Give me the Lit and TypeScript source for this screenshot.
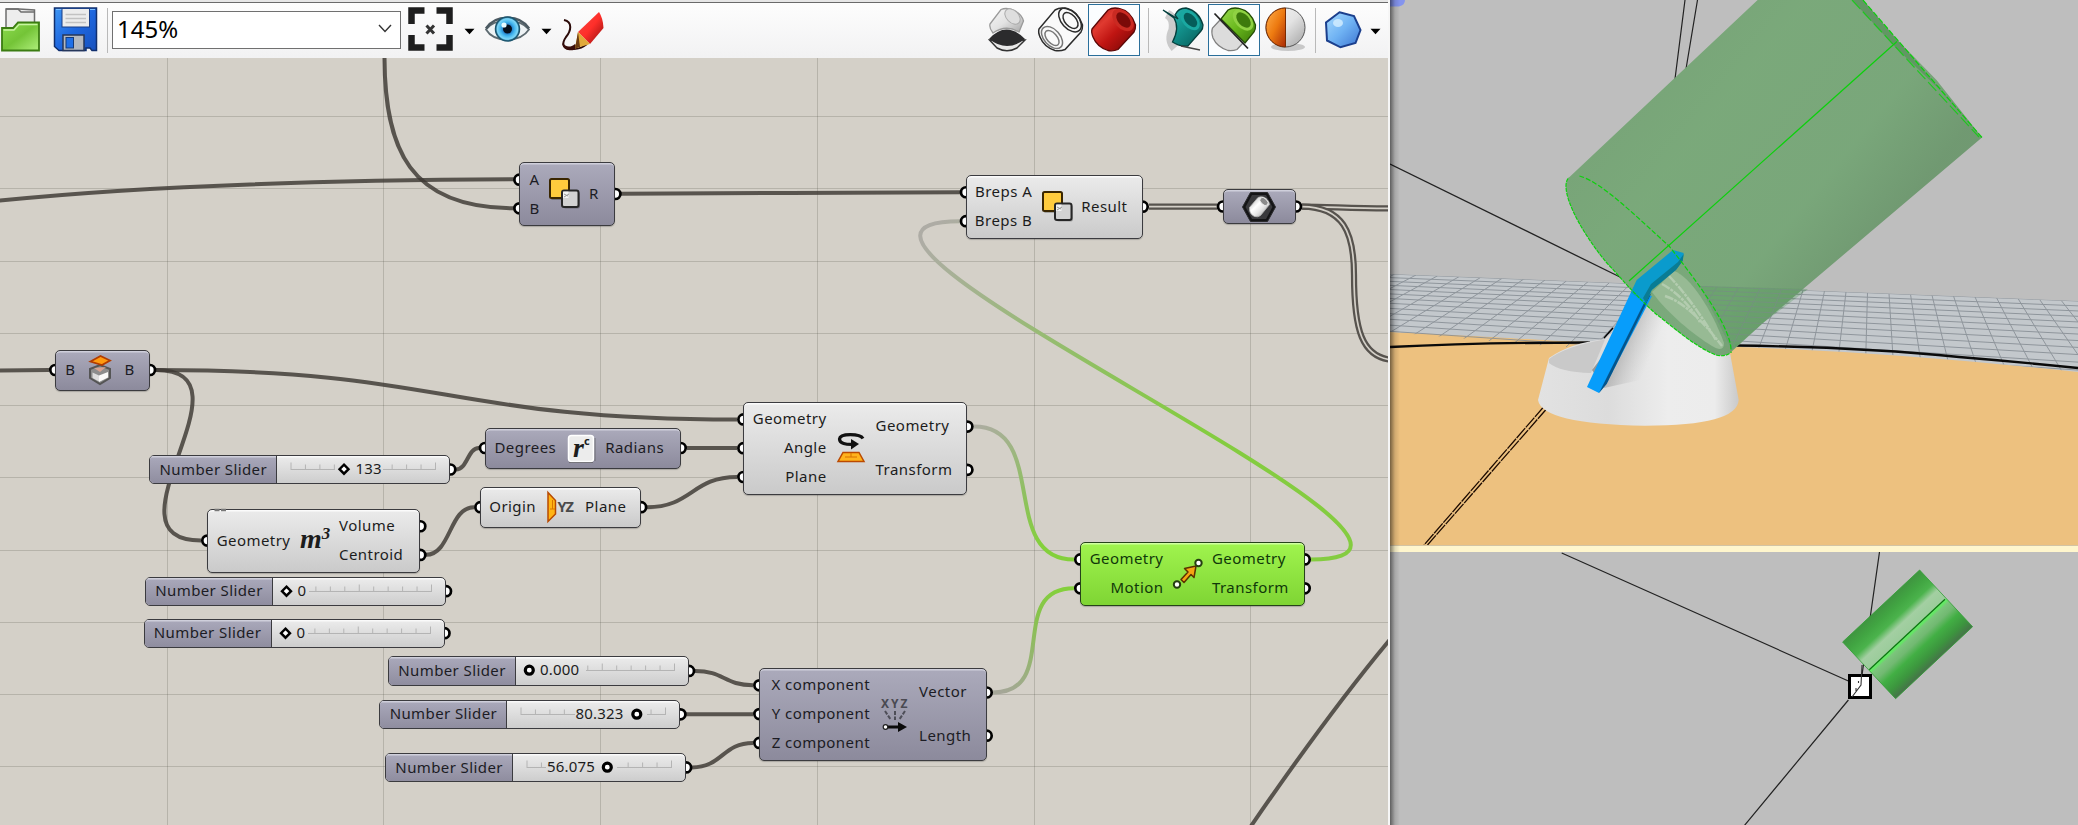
import { LitElement, html, svg, css } from "lit";
import { customElement } from "lit/decorators.js";

type Kind = "dark" | "light" | "pick";
interface GhNode {
  x: number; y: number; w: number; h: number; kind: Kind;
  pad: number; inW: number; mid: number;
  ins: string[]; outs: string[]; icon: string;
}
interface Slider {
  x: number; y: number; value: string; knob: number; textX: number;
  round?: boolean; gap: [number, number];
}

const NODES: GhNode[] = [
  { x: 519.4, y: 162, w: 96, h: 64, kind: "dark", pad: 10.5, inW: 10, mid: 49.5, ins: ["A", "B"], outs: ["R"], icon: "bool" },
  { x: 966, y: 174.5, w: 176.7, h: 64.4, kind: "light", pad: 10.5, inW: 56, mid: 49, ins: ["Breps A", "Breps B"], outs: ["Result"], icon: "bool" },
  { x: 1223, y: 189, w: 73, h: 35, kind: "dark", pad: 0, inW: 0, mid: 70, ins: [""], outs: [""], icon: "geo" },
  { x: 55.3, y: 349.5, w: 94.7, h: 41, kind: "dark", pad: 12.5, inW: 8, mid: 49, ins: ["B"], outs: ["B"], icon: "cap" },
  { x: 207.3, y: 508.6, w: 213, h: 64, kind: "light", pad: 9.5, inW: 74, mid: 48.5, ins: ["Geometry"], outs: ["Volume", "Centroid"], icon: "m3" },
  { x: 485, y: 427.5, w: 195.7, h: 41, kind: "dark", pad: 10.5, inW: 61, mid: 49, ins: ["Degrees"], outs: ["Radians"], icon: "rad" },
  { x: 480.4, y: 486.7, w: 160.7, h: 41, kind: "light", pad: 9, inW: 47, mid: 49, ins: ["Origin"], outs: ["Plane"], icon: "yz" },
  { x: 743.4, y: 401.7, w: 224, h: 93, kind: "light", pad: 9, inW: 74.5, mid: 49, ins: ["Geometry", "Angle", "Plane"], outs: ["Geometry", "Transform"], icon: "rot" },
  { x: 759.4, y: 667.6, w: 227.3, h: 93, kind: "dark", pad: 10, inW: 101, mid: 49, ins: ["X component", "Y component", "Z component"], outs: ["Vector", "Length"], icon: "xyz" },
  { x: 1080.3, y: 541.7, w: 224.4, h: 64.3, kind: "pick", pad: 9, inW: 74.5, mid: 48.5, ins: ["Geometry", "Motion"], outs: ["Geometry", "Transform"], icon: "move" },
];

const SLIDERS: Slider[] = [
  { x: 149.3, y: 455, value: "133", knob: 67, textX: 78.5, gap: [58, 106] },
  { x: 145, y: 576.7, value: "0", knob: 13.5, textX: 24.5, gap: [0, 36] },
  { x: 143.5, y: 618.7, value: "0", knob: 13.5, textX: 24.5, gap: [0, 36] },
  { x: 388, y: 656.4, value: "0.000", knob: 13.3, textX: 24, round: true, gap: [0, 70] },
  { x: 379.4, y: 699.8, value: "80.323", knob: 129.8, textX: 68.5, round: true, gap: [68, 140] },
  { x: 385.1, y: 752.9, value: "56.075", knob: 94.3, textX: 34, round: true, gap: [33, 104] },
];

const PAD_Y = 3.3;
const SLIDER_W = 301;
const SLIDER_H = 29;

/** Soft S-shaped connection whose handles run horizontally. */
const link = (x1: number, y1: number, x2: number, y2: number, d = (x2 - x1) / 2) =>
  `M${x1} ${y1}C${x1 + d} ${y1} ${x2 - d} ${y2} ${x2} ${y2}`;

const WIRES: string[] = [
  "M-4 201C110 189 280 180.5 514 179.3",
  "M384.5 54C384 150 410 208.3 514 208.3",
  link(621, 193.7, 960, 192.3),
  "M-4 370.6L49 369.9",
  link(156, 369.9, 737, 419.6),
  link(156, 369.9, 201, 540.4, 105),
  link(456, 469.5, 479, 448),
  link(426, 554.8, 474, 507.2, 25),
  link(687, 448, 737, 448),
  link(647, 507.2, 737, 477),
  link(695, 670.9, 753, 685.2),
  link(686, 714.2, 753, 714.2),
  link(692, 767.4, 753, 742.9),
  "M1249 829Q1330 711 1392 637",
];

const DOUBLES: string[] = [
  "M1149 206.6L1217 206.6",
  "M1302 206.6C1330 206.6 1350 208.3 1392 208.3",
  "M1302 206.6C1343 207 1354 232 1354 275C1354 330 1362 357 1392 360",
];

const port = (cx: number, cy: number) => svg`<circle class="port" cx=${cx} cy=${cy} r="5"></circle>`;

const nodePorts = (n: GhNode) => {
  const inner = n.h - PAD_Y * 2;
  const at = (i: number, count: number) => n.y + PAD_Y + (inner / count) * (i + 0.5);
  return svg`${n.ins.map((_, i) => port(n.x, at(i, n.ins.length)))}
    ${n.outs.map((_, i) => port(n.x + n.w, at(i, n.outs.length)))}`;
};

const icons: Record<string, unknown> = {
  bool: svg`
    <rect x="6" y="6" width="19" height="19" rx="1.5" fill="#000" opacity=".25"></rect>
    <rect x="18.500" y="17" width="16.500" height="16.500" rx="2" fill="#000" opacity=".25"></rect>
    <rect x="5" y="4" width="19" height="19" rx="1.5" fill="#ffcb3d" stroke="#3a2600" stroke-width="2"></rect>
    <rect x="17" y="15.5" width="16.5" height="16.5" rx="2" fill="#d2d2d2" stroke="#262626" stroke-width="2"></rect>
    <path d="M18 23V16.5H23.5V23Z" fill="#fff" opacity=".7"></path>
    <path d="M19 19l4 2m-4 1l5-3" stroke="#999" stroke-width="1"></path>`,
  geo: svg`
    <path d="M10.500 4.500H27.500L35.500 19L27.500 33.500H10.500L2.500 19Z" fill="#141416" stroke="#2b2b2d" stroke-width="1"></path>
    <path d="M12 7H26L32.500 19L26 31H12L5.500 19Z" fill="#39393c"></path>
    <path d="M9.500 19.500L18 9.500Q20 8.500 23 9Q28.500 11 29.500 16.500L20.500 27.500Q18 29.500 14.500 28.500Q9 26 9.500 19.500Z" fill="url(#steel)" stroke="#b5b5b5" stroke-width=".8"></path>
    <ellipse cx="24" cy="13.500" rx="4.800" ry="3" transform="rotate(45 24 13.5)" fill="#8b8b8b" stroke="#eee" stroke-width=".8"></ellipse>`,
  cap: svg`
    <path d="M9 18L19 14L29 18V27L19 33L9 27Z" fill="#8d8d8d" stroke="#555" stroke-width="2"></path>
    <path d="M11.500 21.500L18 24.500V30.500L11.500 27Z" fill="#ddd"></path><path d="M18 24.500L27 21V26.500L18 31Z" fill="#fafafa"></path>
    <path d="M13 17L25 16L19 21Z" fill="#e9a894" opacity=".8"></path>
    <path d="M9.500 10.500L19.500 5L29 9.500L21 14Z" fill="#ff9a10" stroke="#b23c00" stroke-width="1.800"></path>`,
  m3: svg`<text class="m3" x="4" y="26">m<tspan class="sup" dy="-9">3</tspan></text>`,
  rad: svg`
    <rect x="6.500" y="6.500" width="25" height="26" rx="3" fill="#ececec" stroke="#fff" stroke-width="1.500"></rect>
    <path d="M7 33.500H31M33 9V32" stroke="#555" stroke-width="1" opacity=".6"></path>
    <text class="m3" x="11" y="28">r</text><text class="tiny" x="22" y="16">c</text>`,
  yz: svg`
    <path d="M6 4.500L13.500 12.500V26L6 33.500Z" fill="#ffb414" stroke="#b84a00" stroke-width="1.500"></path>
    <path d="M8 21H13M10.500 12V21" stroke="#d87500"></path>
    <text class="yz" x="15.500" y="23.5">YZ</text>`,
  rot: svg`
    <path d="M31 9.500C28 4.500 8 4 7.500 10C7.500 14.500 14 15.500 21 15.300" fill="none" stroke="#111" stroke-width="3.200"></path>
    <path d="M19 10L27 15L19 20.500Z" fill="#111"></path>
    <path d="M11 23.500H27L32 32.500H6Z" fill="#ffb31c" stroke="#bb4a00" stroke-width="1.500"></path>
    <path d="M13 28H25M19 24V28" stroke="#d87000"></path>`,
  xyz: svg`
    <text class="xyz" x="5" y="13">XYZ</text>
    <path d="M9 16L15 25M19 16V25M29 16L23 25" stroke="#4e4e58" stroke-width="2" stroke-dasharray="4 1.500"></path>
    <path d="M11 32H24" stroke="#0a0a0a" stroke-width="3"></path><path d="M22 27L31 32L22 37Z" fill="#0a0a0a"></path>
    <circle cx="9.500" cy="32" r="2.300" fill="#fff" stroke="#222" stroke-width="1.200"></circle>`,
  move: svg`
    <path d="M12 24.500L19 17L15.500 13.500L27 11L25 22.500L22 19.500L15 27.500Z" fill="#f5a512" stroke="#5c3200" stroke-width="1.500" stroke-linejoin="round"></path>
    <circle cx="29.500" cy="8" r="3.200" fill="#fff" stroke="#263f12" stroke-width="2"></circle>
    <circle cx="8" cy="29.500" r="3.200" fill="#fff" stroke="#263f12" stroke-width="2"></circle>`,
};

/** Toolbar slot; its drawing uses toolbar coordinates. */
const slot = (x0: number, x1: number, body: unknown) =>
  html`<svg class="slot" width=${x1 - x0} height="58" viewBox="${x0} 0 ${x1 - x0} 58">${body}</svg>`;
const drop = (x0: number, x1: number, cx: number) =>
  slot(x0, x1, svg`<path d="M${cx - 5} 28.700H${cx + 5}L${cx} 34.300Z" fill="#000"></path>`);
const rule = (x0: number, x1: number, cx: number) =>
  slot(x0, x1, svg`<path d="M${cx} 8V53" stroke="#b9b9b9" stroke-width="1"></path>`);
const framed = (x: number) => svg`<rect x=${x} y="4.500" width="51" height="51" fill="#fbfdff" stroke="#2a6f9b"></rect>`;

const CAN = "M1092 29L1108 10Q1113 7 1119 8.500Q1131 11 1135.500 25Q1135.700 29 1134 32L1118 49.500Q1113 51.500 1108 50.500Q1097 47 1093 37Q1091 32 1092 29Z";

const gridFan = () => {
  const out = [];
  for (let x = 900; x < 2400; x += 21.5) {
    const k = (x - 1874) * 0.0042;
    out.push(svg`<path d="M${x} ${274 + (x - 1390) * 0.039}L${x + k * 110} ${384 + (x - 1390) * 0.039}"></path>`);
  }
  let step = 3.6;
  for (let y = 0; y < 110; y += step, step *= 1.05) {
    out.push(svg`<path d="M1390 ${274 + y}L2078 ${301 + y * 1.35}"></path>`);
  }
  return out;
};

@customElement("gh-slider")
class GhSlider extends LitElement {
  static properties = { data: { attribute: false } };
  declare data: Slider;
  static styles = css`
    :host { display: flex; box-sizing: border-box; width: 301px; height: 29.4px; border: 1.3px solid #3b3b3f; border-radius: 5px; overflow: hidden;
      background: linear-gradient(#ececec, #cdcdcd); box-shadow: inset 0 1.500px 0 #fafafa; }
    .name { display: flex; align-items: center; justify-content: center; width: 127px; padding-bottom: 2px; box-sizing: border-box;
      border-right: 1.300px solid #3b3b3f; background: linear-gradient(#aaa9bb, #8f8d9f); box-shadow: inset 0 1.500px 0 #cfcfdb;
      font: 15px "Noto Sans", sans-serif; letter-spacing: .4px; color: #1c1c24; white-space: nowrap; }
    .track { display: block; overflow: visible; }
    .ticks { stroke: #b4b4b4; fill: none; }
    .value { font: 15px "Noto Sans", sans-serif; letter-spacing: .2px; fill: #1c1c1c; }
    .knob { fill: #fff; stroke: #000; }
  `;
  render() {
    const s = this.data;
    const [g0, g1] = s.gap;
    const ticks = Array.from({ length: 11 }, (_, i) => 14 + i * 14.45);
    const seen = ticks.filter((t) => t < g0 || t > g1);
    return html`<div class="name">Number Slider</div>
      <svg class="track" width="171" height="27" viewBox="0 0 171 27">
        <g class="ticks">
          ${seen.map((t) => svg`<path d="M${t} ${Math.abs(t - 14) < 1 || t > 158 || Math.abs(t - 86.25) < 1 ? 6.5 : 8.5}V14"></path>`)}
          ${g0 > 14 ? svg`<path d="M14 13.500H${g0}"></path>` : null}
          <path d="M${g1} 13.500H158.500"></path>
        </g>
        ${s.round
          ? svg`<circle class="knob" cx=${s.knob} cy="13.200" r="4" stroke-width="3.200"></circle>`
          : svg`<path class="knob" d="M${s.knob} 8.700L${s.knob + 4.500} 13.200L${s.knob} 17.700L${s.knob - 4.500} 13.200Z" stroke-width="2.400"></path>`}
        <text class="value" x=${s.textX} y="18">${s.value}</text>
      </svg>`;
  }
}

@customElement("gh-node")
class GhNodeView extends LitElement {
  static properties = { data: { attribute: false } };
  declare data: GhNode;
  static styles = css`
    :host { display: block; }
    .node { display: grid; grid-template-rows: minmax(0, 1fr); box-sizing: border-box; height: 100%; padding: 2px 0; border: 1.300px solid #3b3b3f; border-radius: 5px;
      font: 15px "Noto Sans", sans-serif; letter-spacing: .45px; color: #1c1c1c; white-space: nowrap; }
    .light { background: linear-gradient(#ebebeb, #cacaca); box-shadow: inset 0 1.500px 0 #fbfbfb, 0 1px 1px rgba(0,0,0,.2); }
    .dark { background: linear-gradient(#abaabb, #8c8a9c); box-shadow: inset 0 1.500px 0 #cfcfdb, 0 1px 1px rgba(0,0,0,.2); color: #1c1c24; }
    .pick { background: linear-gradient(#a0f44e, #7fd534); box-shadow: inset 0 1.500px 0 #d0ffa0, 0 1px 1px rgba(0,0,0,.2); border-color: #26431a; color: #10380a; }
    .col { display: flex; flex-direction: column; min-width: 0; }
    .ins { align-items: flex-end; }
    .label { display: flex; flex: 1; align-items: center; padding-bottom: 2px; }
    .pic { display: flex; align-items: center; justify-content: center; min-height: 0; }
    .art { display: block; overflow: visible; flex: none; }
    .m3 { font: italic bold 28px "Liberation Serif", serif; fill: #1c1c1c; letter-spacing: 0; }
    .sup { font-size: 17px; }
    .tiny { font: bold 11px "Noto Sans", sans-serif; fill: #222; }
    .yz { font: bold 14.500px "Noto Sans", sans-serif; fill: #4a4a4a; letter-spacing: -1px; }
    .xyz { font: bold 12px "Noto Sans", sans-serif; fill: #4a4a52; letter-spacing: 2px; }
  `;
  render() {
    const n = this.data;
    return html`<div class="node ${n.kind}" style="padding-left:${Math.max(0, n.pad - 1.3)}px;grid-template-columns:${n.inW}px ${n.mid}px 1fr">
      <div class="col ins">${n.ins.map((t) => html`<span class="label">${t}</span>`)}</div>
      <div class="pic"><svg class="art" width="38" height="38" viewBox="0 0 38 38">
        <defs><linearGradient id="steel" x1="0" y1="0" x2="1" y2="1"><stop offset="0" stop-color="#a5a5a5"></stop><stop offset=".4" stop-color="#fff"></stop><stop offset=".6" stop-color="#e6e6e6"></stop><stop offset="1" stop-color="#8a8a8a"></stop></linearGradient></defs>
        ${icons[n.icon]}</svg></div>
      <div class="col">${n.outs.map((t) => html`<span class="label">${t}</span>`)}</div>
    </div>`;
  }
}

@customElement("app-root")
class AppRoot extends LitElement {
  static styles = css`
    :host { display: flex; width: 2078px; height: 825px; overflow: hidden; background: #bebebe; }
    .editor { display: flex; flex-direction: column; width: 1388px; border-right: 2px solid #f6f6f6; flex: none; }
    .toolbar { display: flex; align-items: stretch; height: 58px; box-sizing: border-box; padding-right: 2px; flex: none; background: linear-gradient(#e6e6e6 0 1.500px, #6a6a6a 1.500px 3px, #fdfdfd 3px, #f2f2f3 57px); }
    .slot { display: block; flex: none; }
    .zoom { display: flex; align-items: center; justify-content: space-between; box-sizing: border-box; width: 289px; height: 38px; margin: 11px 0 0; padding: 0 8px 3px 4px;
      border: 1px solid #707070; background: #fff; font: 24px "Noto Sans", sans-serif; color: #000; letter-spacing: 0; }
    .spacer { flex: 1; }
    .canvas { position: relative; flex: 1; overflow: hidden; background: #d4d0c8; }
    .layer { position: absolute; left: 0; top: -58px; width: 1388px; height: 825px; }
    .wires { display: block; position: absolute; left: 0; top: 0; }
    .grid { stroke: rgba(70, 70, 60, .21); stroke-width: 1; fill: none; }
    .wire { fill: none; stroke: #3d3833; stroke-opacity: .82; stroke-width: 4; }
    .outer { fill: none; stroke: #57534e; stroke-width: 6.200; }
    .core { fill: none; stroke: #d4d0c8; stroke-width: 1.700; }
    .glow { fill: none; stroke-width: 4; }
    .port { fill: #fff; stroke: #000; stroke-width: 2.700; }
    .place { position: absolute; }
    .views { display: flex; flex-direction: column; flex: 1; position: relative; }
    .view { display: block; flex: none; background: #bebebe; }
    .split { height: 7px; background: #fff6cd; border-top: 1.500px solid #d3c4a4; flex: none; box-sizing: border-box; }
    .shade { position: absolute; left: 0; top: 0; bottom: 0; width: 10px; background: linear-gradient(90deg, rgba(0,0,0,.5), rgba(0,0,0,.12) 50%, transparent); }
    .mesh { stroke: #868d93; stroke-width: 1; fill: none; opacity: .85; }
    .edge { stroke: #0bd10b; stroke-width: 1.200; fill: none; }
  `;

  private toolbar() {
    return html`<div class="toolbar">
      ${slot(0, 48, svg`
        <path d="M6 30V9H19L34.500 10V28H6Z" fill="#ededed" stroke="#6e6e6e" stroke-width="1.500"></path><path d="M6 9H18L21 12H34.500" fill="none" stroke="#6e6e6e" stroke-width="1.500"></path>
        <path d="M2 50.500V28H13L18 22.500H39V50.500Z" fill="url(#leaf)" stroke="#3b7c12" stroke-width="1.800"></path>
        <path d="M3.500 30H14L19 24.500H37.500" fill="none" stroke="#c7f5a0" stroke-width="1.300"></path>`)}
      ${slot(48, 104, svg`
        <path d="M54.500 8H96.500V50.500H92L90 48H86V50.500H59L54.500 46.500Z" fill="url(#disk)" stroke="#102f6e" stroke-width="1.500"></path>
        <path d="M56 9.500H95" stroke="#7fc0ff" stroke-width="1"></path>
        <rect x="62" y="8.500" width="27.500" height="18.500" fill="#ececec" stroke="#1a3f86"></rect>
        <path d="M65.500 14.500H86M65.500 18.500H86M65.500 22.500H86" stroke="#c2c2c2" stroke-width="1.500"></path>
        <rect x="63" y="35" width="21" height="15.500" fill="#b4b8bf" stroke="#27375a" stroke-width="1.500"></rect><rect x="66" y="37.500" width="7.500" height="10.500" fill="#1f6fe8" stroke="#173a77"></rect>`)}
      ${rule(104, 112, 107.5)}
      <div class="zoom"><span>145%</span><svg width="14" height="9" viewBox="0 0 14 9"><path d="M1 1L7 7.500L13 1" fill="none" stroke="#333" stroke-width="1.400"></path></svg></div>
      ${slot(401, 460, svg`
        <path d="M411.500 24V10.500H424.500M436.500 10.500H449.500V24M449.500 35V47.500H436.500M424.500 47.500H411.500V35" fill="none" stroke="#1e1e1e" stroke-width="6.500"></path>
        <path d="M426.500 25.500L434 33.500M434 25.500L426.500 33.500" stroke="#333" stroke-width="3"></path>`)}
      ${drop(460, 479, 469.5)}
      ${slot(479, 537, svg`
        <path d="M486 29.500C494 18 520 18 529 29.500C520 43 494 43 486 29.500Z" fill="#eef3f5" stroke="#5d6a70" stroke-width="1.800"></path>
        <path d="M486 28.500C495 14 520 14 529 28.500" fill="none" stroke="#4c5a62" stroke-width="2.500"></path>
        <circle cx="507.500" cy="29" r="12" fill="url(#iris)" stroke="#1d566f" stroke-width="1.500"></circle><circle cx="507.500" cy="29" r="4.500" fill="#07101c"></circle>
        <circle cx="504" cy="25" r="2.600" fill="#e7fbff"></circle>`)}
      ${drop(537, 556, 546.5)}
      ${slot(556, 612, svg`
        <path d="M564 20C573 22 571 31 566 37C561 44 563 50 573 49C580 49 583 47 587 44" fill="none" stroke="#2b0a08" stroke-width="2"></path>
        <path d="M562 43C563 51 572 52 578 48L575 44C570 48 566 47 562 43Z" fill="#380d0a"></path>
        <path d="M578 32L599 12Q603 18 603.500 28L590 44Z" fill="url(#crayon)"></path>
        <path d="M578 32L590 44L575 48.500Z" fill="#e1aa3a"></path><path d="M578 32L575 48.500L580 47Z" fill="#6b3b12"></path>`)}
      <div class="spacer"></div>
      ${slot(983, 1035, svg`
        <path d="M990 24L1001 9.500C1008 6.500 1021 11 1023.500 21L1019 32Q1006 24 993 33Q989 28 990 24Z" fill="url(#pale)" stroke="#9a9a9a" stroke-width="1.300"></path>
        <ellipse cx="1012.500" cy="16.500" rx="9" ry="6" transform="rotate(45 1012.5 16.5)" fill="#dedede" stroke="#aaa"></ellipse>
        <path d="M989.500 40L997 48Q1007 53.500 1017 48L1025 40Z" fill="#e8e8e8" stroke="#333" stroke-width="1.500"></path>
        <path d="M989 39Q1006 20 1025 39Q1007 53 989 39Z" fill="#2b2b2d"></path>`)}
      ${slot(1035, 1088, svg`
        <g fill="none" stroke="#2c2c2c" stroke-width="1.500" transform="translate(-53 0)"><path d=${CAN} fill="#fafafa"></path>
        <ellipse cx="1105" cy="37.500" rx="13" ry="8" transform="rotate(48 1105 37.5)" stroke="#777"></ellipse><ellipse cx="1105" cy="38" rx="9" ry="5" transform="rotate(48 1105 38)" stroke="#777"></ellipse>
        <ellipse cx="1123" cy="20" rx="14" ry="8.500" transform="rotate(48 1123 20)"></ellipse><ellipse cx="1123.500" cy="20.500" rx="9.500" ry="5.500" transform="rotate(48 1123.5 20.5)"></ellipse></g>`)}
      ${slot(1088, 1140, svg`${framed(1088.5)}
        <path d=${CAN} fill="url(#ruby)" stroke="#5a0606" stroke-width="1.300"></path>
        <ellipse cx="1123" cy="20" rx="13" ry="8.500" transform="rotate(48 1123 20)" fill="#c92a22"></ellipse><ellipse cx="1123.500" cy="20" rx="9" ry="5.500" transform="rotate(48 1123.5 20)" fill="#7a0a08"></ellipse>`)}
      ${rule(1140, 1157, 1148.5)}
      ${slot(1157, 1208, svg`
        <path d="M1167 14Q1175 18 1173 30Q1168 40 1175 48" fill="none" stroke="#777" stroke-width="9" opacity=".35"></path>
        <path d="M1163 10L1178 19L1175 15Q1178 8 1186 8Q1199 11 1203 25Q1203 29 1201 31L1188 46Q1180 47 1172.500 42Q1180 28 1174 18Z" fill="url(#teal)" stroke="#053f3d" stroke-width="1.300"></path>
        <ellipse cx="1190" cy="20" rx="12" ry="7.500" transform="rotate(48 1190 20)" fill="#1aa8a1"></ellipse><ellipse cx="1190.500" cy="20" rx="8.500" ry="5" transform="rotate(48 1190.5 20)" fill="#055c59"></ellipse>
        <path d="M1181 46L1200 50" stroke="#444" stroke-width="1.300"></path>`)}
      ${slot(1208, 1260, svg`${framed(1208.5)}
        <path d="M1220 20L1212.500 28Q1211 32 1213 38Q1217 47 1228 50.500Q1233 51 1237 49.500L1243 43Z" fill="#dcdcdc" stroke="#808080" stroke-width="1.300"></path>
        <path d="M1221 19L1228 10Q1233 7 1239 8.500Q1251 11 1255.500 25Q1255.700 29 1254 32L1245 43Z" fill="url(#lime)" stroke="#234c05" stroke-width="1.300"></path>
        <ellipse cx="1243" cy="20" rx="12.500" ry="8" transform="rotate(48 1243 20)" fill="#8fd143"></ellipse><ellipse cx="1243.500" cy="20" rx="9" ry="5.500" transform="rotate(48 1243.5 20)" fill="#3d7a0c"></ellipse>
        <path d="M1214.500 13.500L1248 48.500" stroke="#222" stroke-width="1.800"></path>`)}
      ${slot(1260, 1311, svg`
        <ellipse cx="1288" cy="47" rx="17" ry="4" fill="#000" opacity=".18"></ellipse>
        <circle cx="1285.500" cy="27.500" r="19.500" fill="url(#pale)" stroke="#555"></circle><path d="M1285.500 8A19.500 19.500 0 0 0 1285.500 47Z" fill="url(#amber)" stroke="#7a2b00"></path>`)}
      ${rule(1311, 1320, 1315.5)}
      ${slot(1320, 1366, svg`
        <path d="M1339.500 12.300L1354 16L1360.500 30L1355.500 43L1340.500 47.300L1327 40.500L1326 22.500Z" fill="url(#sky)" stroke="#1b3f8d" stroke-width="2"></path>
        <ellipse cx="1338" cy="23" rx="5" ry="4" fill="#d6efff" opacity=".8"></ellipse>`)}
      ${drop(1366, 1386, 1375.5)}
    </div>`;
  }

  private canvas() {
    const cols = [167.5, 383.5, 600.5, 817.5, 1034.5, 1250.5];
    const rows = [116.5, 188.5, 261.5, 333.5, 405.5, 477.5, 550.5, 622.5, 694.5, 766.5];
    return html`<div class="canvas"><div class="layer">
      <svg class="wires" width="1388" height="825" viewBox="0 0 1388 825">
        <defs>
          <linearGradient id="g1" gradientUnits="userSpaceOnUse" x1="974" y1="426" x2="1050" y2="540"><stop offset="0" stop-color="#adaca2"></stop><stop offset=".6" stop-color="#8fbf62"></stop><stop offset="1" stop-color="#84d03c"></stop></linearGradient>
          <linearGradient id="g2" gradientUnits="userSpaceOnUse" x1="1000" y1="692" x2="1060" y2="590"><stop offset="0" stop-color="#a5a698"></stop><stop offset=".7" stop-color="#88c24e"></stop><stop offset="1" stop-color="#84d03c"></stop></linearGradient>
          <linearGradient id="g3" gradientUnits="userSpaceOnUse" x1="940" y1="221" x2="1180" y2="440"><stop offset="0" stop-color="#aeaca5"></stop><stop offset=".6" stop-color="#91bf66"></stop><stop offset="1" stop-color="#84cc40"></stop></linearGradient>
        </defs>
        <g class="grid">${cols.map((x) => svg`<path d="M${x} 58V825"></path>`)}${rows.map((y) => svg`<path d="M0 ${y}H1388"></path>`)}</g>
        ${WIRES.map((d) => svg`<path class="wire" d=${d}></path>`)}
        ${DOUBLES.map((d) => svg`<path class="outer" d=${d}></path><path class="core" d=${d}></path>`)}
        <path class="glow" stroke="url(#g1)" d=${link(974, 426.4, 1074, 559.5, 76)}></path>
        <path class="glow" stroke="url(#g2)" d=${link(993, 692.5, 1074, 588.2, 68)}></path>
        <path class="glow" stroke="url(#g3)" d=${link(1311, 559.5, 960, 221.3, 223)}></path>
        ${NODES.map(nodePorts)}
        ${SLIDERS.map((s) => port(s.x + SLIDER_W, s.y + SLIDER_H / 2))}
      </svg>
      ${NODES.map((n) => html`<gh-node class="place" .data=${n} style="left:${n.x}px;top:${n.y}px;width:${n.w}px;height:${n.h}px"></gh-node>`)}
      ${SLIDERS.map((s) => html`<gh-slider class="place" .data=${s} style="left:${s.x}px;top:${s.y}px"></gh-slider>`)}
      <svg class="wires" width="240" height="520" viewBox="0 0 240 520"><path d="M214.500 510H219.500M221 510H226" stroke="#777" stroke-width="2.400"></path></svg>
    </div></div>`;
  }

  private views() {
    return html`<div class="views">
      <svg class="view" width="688" height="545" viewBox="1390 0 688 545">
        <defs>
          <clipPath id="plane"><path d="M1390 274L2078 301V372Q1900 352 1740 347H1560L1390 332Z"></path></clipPath>
          <linearGradient id="cone"><stop offset="0" stop-color="#e2e2e2"></stop><stop offset=".35" stop-color="#dcdcdc"></stop><stop offset=".65" stop-color="#ededed"></stop><stop offset=".88" stop-color="#ececec"></stop><stop offset="1" stop-color="#c9c9c9"></stop></linearGradient>
          <linearGradient id="tube" gradientUnits="userSpaceOnUse" x1="1615" y1="60" x2="1860" y2="260"><stop offset="0" stop-color="#75a275"></stop><stop offset=".35" stop-color="#78a878"></stop><stop offset=".75" stop-color="#77a678"></stop><stop offset="1" stop-color="#6e986f"></stop></linearGradient>
          <linearGradient id="dim" gradientUnits="userSpaceOnUse" x1="1606" y1="340" x2="1650" y2="358"><stop offset="0" stop-color="#666" stop-opacity=".6"></stop><stop offset="1" stop-color="#aaa" stop-opacity="0"></stop></linearGradient>
        </defs>
        <path d="M1390 0H1405Q1405 5 1399 6.500H1390Z" fill="#8494ee"></path>
        <path d="M1390 332Q1480 336 1560 341H1740Q1900 350 2078 371V546H1390Z" fill="#edc17f"></path>
        <path d="M1390 274L2078 301V372Q1900 353 1740 347L1560 341Q1480 336 1390 332Z" fill="#c4c8cc"></path>
        <g class="mesh" clip-path="url(#plane)">${gridFan()}</g>
        <path d="M1390 347Q1480 342.500 1590 342.500M1735 345.500Q1860 347 1959 357Q2020 362 2078 368" fill="none" stroke="#0a0a0a" stroke-width="2.400"></path>
        <path d="M1390 164L1622 278" stroke="#222" stroke-width="1.300"></path>
        <path d="M1685 0L1675 79M1697.500 0L1686 69" stroke="#222" stroke-width="1.200"></path>
        <path d="M1543.500 407L1424 545M1546.500 409L1427.500 545" stroke="#1d0b00" stroke-width="1.300" stroke-dasharray="13 1"></path>
        <path d="M1604 338L1613 328" stroke="#000" stroke-width="1.500"></path>
        <path d="M1549 358Q1570 343 1605 339L1655 290L1730 353L1738.700 400Q1737 425.700 1645 425.700Q1542 424 1538 400Z" fill="url(#cone)"></path>
        <path d="M1549 359Q1566 346 1605 339.500L1591 373Q1560 372 1549 363Z" fill="#c9c9c9"></path>
        <path d="M1652 292L1700 345L1640 380L1604 388L1592 370Z" fill="url(#dim)"></path>
        <path d="M1569 177.500L1757.600 0H1863L1896.500 39L1936.500 80L1982 137.500L1763 323L1729.500 353.600Q1724 357 1716 355C1695 347 1672 326 1656 314C1636 296 1620 277 1606 262C1587 239 1566 205 1566 186Q1566 180 1569 177.500Z" fill="url(#tube)" fill-opacity=".97"></path>
        <clipPath id="see"><path d="M1700 286L1808 289L1763 323L1732 350Z"></path></clipPath>
        <g class="mesh" opacity=".6" clip-path="url(#see)">${gridFan()}</g>
        <path d="M1700 286L1808 289L1763 323L1732 350Z" fill="#4f9a55" opacity=".3"></path>
        <path d="M1863 0L1896.500 39L1982 137.500L1938 88L1896 48L1852 0Z" fill="#5d925f" opacity=".8"></path>
        <path d="M1674 271C1690 276 1712 310 1724 343Q1724 353 1712 346C1694 335 1668 314 1652 292Z" fill="#97ba94"></path>
        <path d="M1669 276Q1692 300 1716 340M1662 284Q1684 296 1700 322M1665 296Q1690 304 1722 346" fill="none" stroke="#bfd4bb" stroke-width="2.500" stroke-dasharray="9 1 3 1" opacity=".7"></path>
        <path d="M1587 387L1630.700 292.700L1652 296L1606.700 383L1599 393Z" fill="#079dfb"></path>
        <path d="M1599 393L1606.700 384L1651.500 293L1646 299L1601 389Z" fill="#04558c"></path>
        <path d="M1630.700 292.700L1636.700 280L1673 250L1683.700 253L1682.700 260L1676.700 269L1651.700 290L1646 303Z" fill="#0a9bcd"></path>
        <path d="M1683.700 254L1682.700 261L1676 270L1651.700 290L1646 303L1643 298L1651 284L1678 262Z" fill="#0a7c94"></path>
        <path class="edge" d="M1729.500 353.600Q1724 357 1716 355C1695 347 1672 326 1656 314C1636 296 1620 277 1606 262C1587 239 1566 205 1566 186Q1566 180 1569 177.500" stroke-dasharray="4 1"></path>
        <path class="edge" d="M1579.500 176C1602 182 1640 220 1669 246C1700 285 1733 330 1731 353" stroke-dasharray="5 2"></path>
        <path class="edge" d="M1629 281L1897 41.500"></path>
        <path class="edge" d="M1863 0L1982 137.500" stroke-dasharray="6 2"></path>
        <path class="edge" d="M1852 0L1979 137" stroke-dasharray="12 4" opacity=".8"></path>
      </svg>
      <div class="split"></div>
      <svg class="view" width="688" height="273" viewBox="1390 552 688 273">
        <defs><linearGradient id="roll" gradientUnits="userSpaceOnUse" x1="1843" y1="642" x2="1896" y2="699">
          <stop offset="0" stop-color="#3f9540"></stop><stop offset=".12" stop-color="#41a542"></stop><stop offset=".24" stop-color="#4bb34c"></stop><stop offset=".34" stop-color="#a3cfa2"></stop>
          <stop offset=".48" stop-color="#9bcc9b"></stop><stop offset=".51" stop-color="#5fee60"></stop><stop offset=".55" stop-color="#7cc47c"></stop><stop offset=".64" stop-color="#72b972"></stop><stop offset=".74" stop-color="#42af44"></stop><stop offset=".88" stop-color="#3c953e"></stop><stop offset="1" stop-color="#47704a"></stop></linearGradient></defs>
        <path d="M1561.700 553L1848.400 681M1879.500 552L1862 675M1848.400 700L1744 826" stroke="#222" stroke-width="1.200" fill="none"></path>
        <path d="M1919.600 570L1972.600 626.700L1895.600 698.700L1842.600 642Z" fill="url(#roll)" stroke="#2f9e32" stroke-width=".8"></path>
        <path d="M1869.300 669.700L1945 599.300" stroke="#0b7810" stroke-width="1.300"></path>
        <rect x="1849.500" y="675.500" width="21" height="22" fill="#fff" stroke="#000" stroke-width="3"></rect>
        <path d="M1862 665L1861 685L1852 697M1856 688V691M1858.500 681V683" stroke="#333" stroke-width="1.100" fill="none"></path>
      </svg>
      <div class="shade"></div>
    </div>`;
  }

  render() {
    const g = (id: string, stops: [number, string][]) => svg`<linearGradient id=${id} x1="0" y1="0" x2="1" y2="1">${stops.map(([o, c]) => svg`<stop offset=${o} stop-color=${c}></stop>`)}</linearGradient>`;
    return html`
      <svg class="place" width="0" height="0"><defs>
        ${g("leaf", [[0, "#8ddc4f"], [0.5, "#74c437"], [1, "#b0ef7c"]])}
        ${g("disk", [[0, "#3f97f5"], [0.5, "#1e67df"], [1, "#1750bd"]])}
        ${g("crayon", [[0, "#f04a44"], [0.5, "#ff2f2a"], [1, "#8f0d0d"]])}
        ${g("pale", [[0, "#f6f6f6"], [0.5, "#e3e3e3"], [1, "#a2a2a2"]])}
        ${g("ruby", [[0, "#a80d0a"], [0.3, "#e03a30"], [0.55, "#c01512"], [1, "#6e0404"]])}
        ${g("teal", [[0, "#2fc4bd"], [0.5, "#12908b"], [1, "#065a57"]])}
        ${g("lime", [[0, "#9adb4e"], [0.5, "#69b81d"], [1, "#3b7a08"]])}
        ${g("amber", [[0, "#ffb14e"], [0.5, "#ed7a10"], [1, "#a92a05"]])}
        ${g("sky", [[0, "#a9dcff"], [0.5, "#6fb2f3"], [1, "#3b74d1"]])}
        <radialGradient id="iris"><stop offset=".3" stop-color="#1b6ec0"></stop><stop offset=".6" stop-color="#45b8ef"></stop><stop offset=".85" stop-color="#7fd6f7"></stop><stop offset="1" stop-color="#2a7fa8"></stop></radialGradient>
      </defs></svg>
      <div class="editor">${this.toolbar()}${this.canvas()}</div>
      ${this.views()}`;
  }
}
